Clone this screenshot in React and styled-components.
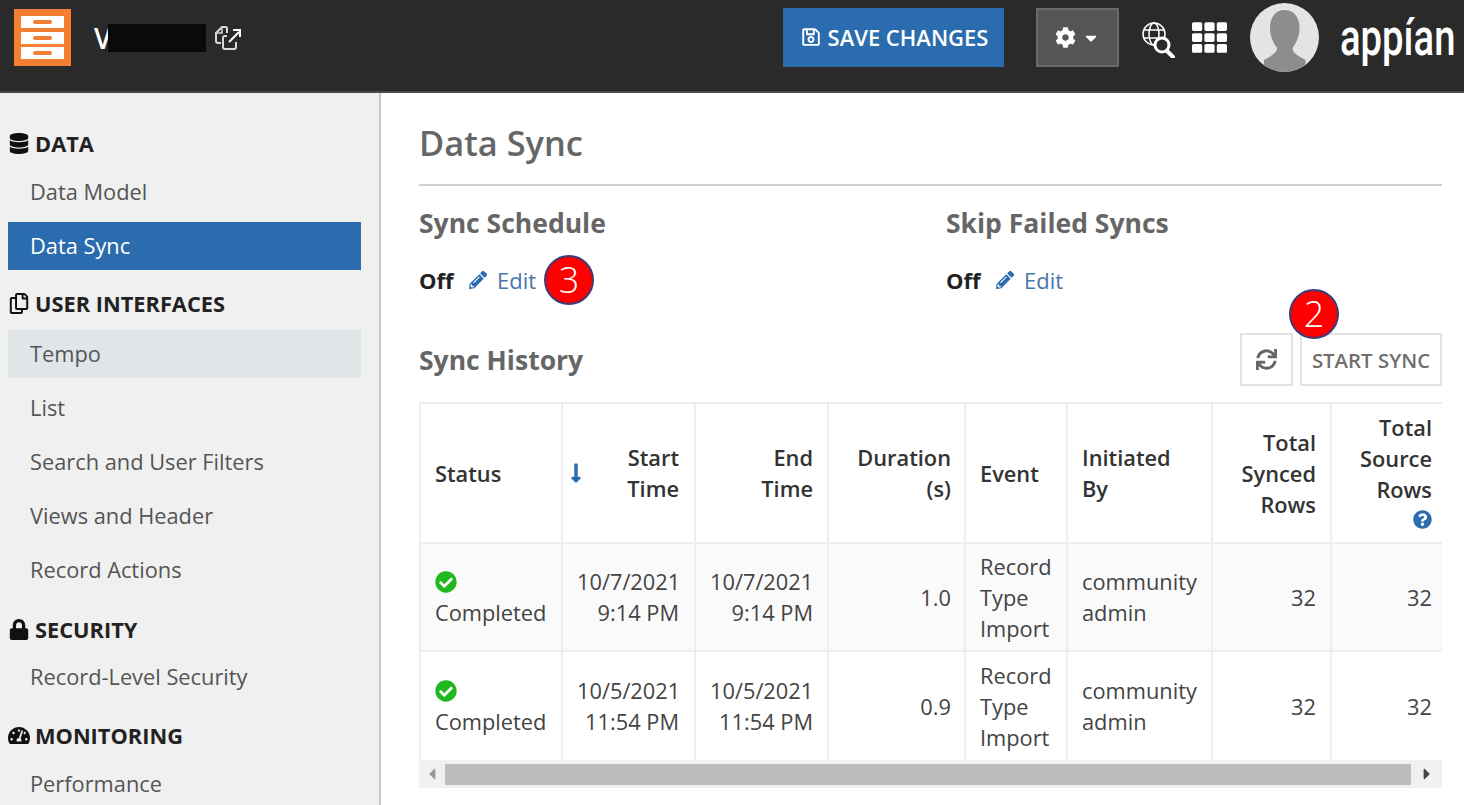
import React from "react";
import styled, { createGlobalStyle } from "styled-components";
import {
  FaCaretDown,
  FaCaretLeft,
  FaCaretRight,
  FaCheckCircle,
  FaCog,
  FaDatabase,
  FaLock,
  FaLongArrowAltDown,
  FaPencilAlt,
  FaQuestionCircle,
  FaRegCopy,
  FaRegSave,
  FaSync,
  FaTachometerAlt,
  FaTh,
} from "react-icons/fa";

const GlobalStyle = createGlobalStyle`
  html, body {
    margin: 0;
    padding: 0;
    height: 805px;
    overflow: hidden;
    background: #fff;
    font-family: "Open Sans", sans-serif;
  }
  * { box-sizing: border-box; }
`;

const Page = styled.div`
  width: 1464px;
  height: 805px;
  display: flex;
  flex-direction: column;
  overflow: hidden;
`;

const Header = styled.header`
  height: 93px;
  flex: none;
  display: flex;
  align-items: center;
  padding: 0 9px 16px 14px;
  background: #2a2a2a;
  border-bottom: 2px solid #4a4a4a;
`;

const AppTitle = styled.div`
  display: flex;
  align-items: center;
  margin-left: 23px;
  color: #fff;
  font-size: 28px;
  font-weight: 600;
`;

const Redacted = styled.span`
  width: 98px;
  height: 28px;
  margin: 1px 0 0 -3px;
  background: #0a0a0a;
`;

const HeaderTools = styled.div`
  margin-left: auto;
  display: flex;
  align-items: center;
`;

const SaveButton = styled.button`
  width: 221px;
  height: 59px;
  display: flex;
  align-items: center;
  justify-content: center;
  gap: 7px;
  padding: 0 0 2px 2px;
  border: 0;
  background: #2a6cad;
  color: #fff;
  font: 600 22px "Open Sans", sans-serif;
`;

const GearButton = styled.button`
  width: 83px;
  height: 59px;
  margin-left: 32px;
  display: flex;
  align-items: center;
  justify-content: center;
  gap: 6px;
  border: 2px solid #6b6b6b;
  background: #555;
  color: #fff;
`;

const GlobeWrap = styled.div`
  margin-left: 23px;
  width: 34px;
  height: 36px;
  margin-top: 4px;
`;

const GridIcon = styled(FaTh)`
  margin-left: 16px;
  color: #fff;
  font-size: 35px;
`;

const Avatar = styled.div`
  margin-left: 23px;
  width: 69px;
  height: 69px;
  border-radius: 50%;
  overflow: hidden;
`;

const AppianLogo = styled.span`
  width: 115px;
  margin-left: 21px;
  color: #fff;
  font: 500 52px/1 "Roboto", sans-serif;
  transform: scaleX(0.735);
  transform-origin: left center;
  white-space: nowrap;
`;

const Body = styled.div`
  flex: 1;
  display: flex;
  min-height: 0;
`;

const Sidebar = styled.nav`
  width: 381px;
  flex: none;
  padding: 33px 18px 0 8px;
  background: #f0f0f0;
  border-right: 2px solid #c8c8c8;
`;

const NavSection = styled.section`
  margin-bottom: ${({ $after }) => $after}px;
`;

const NavHeading = styled.h3`
  height: 36px;
  margin: 0 0 ${({ $below }) => $below}px;
  padding-bottom: 2px;
  display: flex;
  align-items: center;
  gap: 5px;
  color: #222;
  font-size: 21.8px;
  font-weight: 700;
  text-transform: uppercase;

  svg {
    width: 22px;
    height: 21px;
    color: #111;
  }
`;

const NavItem = styled.a`
  height: 48px;
  margin-bottom: 6px;
  padding: 0 0 2px 22px;
  display: flex;
  align-items: center;
  font-size: 21.8px;
  color: ${({ $active }) => ($active ? "#fff" : "#555")};
  background: ${({ $active, $hover }) =>
    $active ? "#2a6cad" : $hover ? "#e0e6e8" : "transparent"};

  &:last-child {
    margin-bottom: 0;
  }
`;

const Main = styled.main`
  flex: 1;
  min-width: 0;
  padding: 27px 22px 0 38px;
`;

const Title = styled.h1`
  height: 46px;
  margin: 0;
  color: #666;
  font-size: 34.4px;
  line-height: 46px;
  font-weight: 600;
`;

const Rule = styled.hr`
  height: 2px;
  margin: 18px 0 20px;
  border: 0;
  background: #d0d0d0;
`;

const Columns = styled.div`
  display: grid;
  grid-template-columns: 527px 1fr;
`;

const SubHeading = styled.h2`
  margin: 0;
  color: #666;
  font-size: 26.5px;
  line-height: 34px;
  font-weight: 700;
`;

const StatusRow = styled.div`
  height: 50px;
  margin-top: 15px;
  display: flex;
  align-items: center;
`;

const StatusValue = styled.span`
  width: 50px;
  color: #222;
  font-size: 22px;
  font-weight: 700;
`;

const EditLink = styled.a`
  display: flex;
  align-items: center;
  gap: 10px;
  color: #4a76a8;
  font-size: 22px;

  svg {
    width: 18px;
    height: 18px;
    color: #2a6cad;
  }
`;

const Badge = styled.span`
  width: 50px;
  height: 50px;
  display: flex;
  align-items: center;
  justify-content: center;
  flex: none;
  border-radius: 50%;
  background: #f00;
  border: 2px solid #3c3c78;
  color: #fff;
  font: 300 36px/1 "Open Sans", sans-serif;
`;

const InlineBadge = styled(Badge)`
  margin-left: 8px;
`;

const FloatingBadge = styled(Badge)`
  position: absolute;
  left: 49px;
  top: -44px;
`;

const HistoryBar = styled.div`
  margin-top: 28px;
  display: flex;
  align-items: center;
  justify-content: space-between;
`;

const HistoryActions = styled.div`
  position: relative;
  display: flex;
  gap: 7px;
`;

const IconButton = styled.button`
  width: 53px;
  height: 53px;
  display: flex;
  align-items: center;
  justify-content: center;
  background: #fff;
  border: 2px solid #e2e2e2;
  color: #666;

  svg {
    width: 21px;
    height: 21px;
  }
`;

const StartButton = styled.button`
  width: 142px;
  height: 53px;
  padding: 0;
  background: #fff;
  border: 2px solid #e2e2e2;
  color: #6f6f6f;
  font: 600 20.4px "Open Sans", sans-serif;
`;

const TableWrap = styled.div`
  margin-top: 16px;
  overflow: hidden;
`;

const Table = styled.table`
  width: 1028px;
  table-layout: fixed;
  border-collapse: separate;
  border-spacing: 0;
  font-size: 21.8px;
  line-height: 31px;
  color: #444;
  border-top: 2px solid #eee;
`;

const Th = styled.th`
  height: 140px;
  padding: 0 ${({ $pr }) => $pr || 15}px 0 14px;
  text-align: ${({ $right }) => ($right ? "right" : "left")};
  font-weight: 600;
  color: #333;
  border-left: 2px solid #eee;
  border-bottom: 2px solid #eee;
`;

const Td = styled.td`
  height: ${({ $h }) => $h}px;
  padding: 0 ${({ $pr }) => $pr || 15}px 0 14px;
  text-align: ${({ $right }) => ($right ? "right" : "left")};
  border-left: 2px solid #eee;
  border-bottom: ${({ $end }) => ($end ? "0" : "2px solid #eee")};
  background: ${({ $shade }) => ($shade ? "#fafafa" : "#fff")};
`;

const SortHead = styled.div`
  display: flex;
  align-items: center;
  justify-content: space-between;
  margin-left: -8px;

  svg {
    color: #2a6cad;
    width: 14px;
    height: 22px;
    flex: none;
  }
`;

const HelpIcon = styled(FaQuestionCircle)`
  display: block;
  margin: 5px 0 6px auto;
  width: 19px;
  height: 19px;
  color: #2a6cad;
`;

const StatusIcon = styled(FaCheckCircle)`
  display: block;
  width: 22px;
  height: 22px;
  margin: 5px 0 4px;
  color: #1fb81f;
`;

const Scrollbar = styled.div`
  height: 28px;
  display: flex;
  align-items: center;
  background: #f1f1f1;
`;

const ScrollArrow = styled.span`
  width: ${({ $w }) => $w}px;
  flex: none;
  display: flex;
  justify-content: center;
  color: ${({ $dark }) => ($dark ? "#444" : "#999")};
  font-size: 18px;
`;

const ScrollThumb = styled.div`
  flex: 1;
  height: 21px;
  background: #bdbdbd;
`;

const CabinetLogo = () => (
  <svg width="57" height="57" viewBox="0 0 57 57">
    <rect width="57" height="57" fill="#f47e32" />
    {[7, 23, 38].map((y) => (
      <g key={y}>
        <rect x="7" y={y} width="43" height="12" fill="#fff" />
        <rect x="19" y={y + 4} width="19" height="4" rx="2" fill="#f47e32" />
      </g>
    ))}
  </svg>
);

const LinkedFilesIcon = () => (
  <svg
    width="28"
    height="26"
    viewBox="0 0 28 26"
    fill="none"
    stroke="#d8d8d8"
    strokeWidth="2"
    style={{ marginLeft: 8 }}
  >
    <path d="M13 8V3.500Q13 2 11.500 2H8L2 8v8q0 2 2 2h3" />
    <path d="M8 2v6H2" strokeWidth="1.500" />
    <path d="M13 11h-2q-2 0-2 2v9q0 2 2 2h9q2 0 2-2v-5" />
    <path d="M15 17 25 7M19 5h7v7" stroke="#fff" />
  </svg>
);

const GlobeSearchIcon = () => (
  <svg width="34" height="36" viewBox="0 0 34 36" fill="none" stroke="#fff">
    <circle cx="12" cy="12" r="11" strokeWidth="1.500" />
    <ellipse cx="12" cy="12" rx="5" ry="11" strokeWidth="1.500" />
    <path d="M2 8h20M2 16h20" strokeWidth="1.500" />
    <circle cx="20" cy="23" r="7" fill="#2a2a2a" strokeWidth="3" />
    <path d="m25 29 6 6" strokeWidth="4" strokeLinecap="round" />
  </svg>
);

const AvatarImage = () => (
  <svg width="69" height="69" viewBox="0 0 69 69">
    <rect width="69" height="69" fill="#e4e4e4" />
    <path
      d="M34.500 7c10 0 15 8 15 18 0 9-4 16-7 20 0 5 6 8 13 12v12H14V57c7-4 13-7 13-12-3-4-7-11-7-20 0-10 5-18 14.500-18Z"
      fill="#8d8d8d"
    />
  </svg>
);

const rows = [
  { start: ["10/7/2021", "9:14 PM"], duration: "1.0", shade: true, h: 108 },
  { start: ["10/5/2021", "11:54 PM"], duration: "0.9", shade: false, h: 108 },
];

const App = () => (
  <Page>
    <GlobalStyle />
    <Header>
      <CabinetLogo />
      <AppTitle>
        V<Redacted />
        <LinkedFilesIcon />
      </AppTitle>
      <HeaderTools>
        <SaveButton>
          <FaRegSave size={20} />
          SAVE CHANGES
        </SaveButton>
        <GearButton>
          <FaCog size={21} />
          <FaCaretDown size={18} />
        </GearButton>
        <GlobeWrap>
          <GlobeSearchIcon />
        </GlobeWrap>
        <GridIcon />
        <Avatar>
          <AvatarImage />
        </Avatar>
        <AppianLogo>appían</AppianLogo>
      </HeaderTools>
    </Header>
    <Body>
      <Sidebar>
        <NavSection $after={16}>
          <NavHeading $below={6}>
            <FaDatabase />
            Data
          </NavHeading>
          <NavItem>Data Model</NavItem>
          <NavItem $active>Data Sync</NavItem>
        </NavSection>
        <NavSection $after={18}>
          <NavHeading $below={8}>
            <FaRegCopy />
            User Interfaces
          </NavHeading>
          <NavItem $hover>Tempo</NavItem>
          <NavItem>List</NavItem>
          <NavItem>Search and User Filters</NavItem>
          <NavItem>Views and Header</NavItem>
          <NavItem>Record Actions</NavItem>
        </NavSection>
        <NavSection $after={17}>
          <NavHeading $below={5}>
            <FaLock />
            Security
          </NavHeading>
          <NavItem>Record-Level Security</NavItem>
        </NavSection>
        <NavSection $after={0}>
          <NavHeading $below={6}>
            <FaTachometerAlt />
            Monitoring
          </NavHeading>
          <NavItem>Performance</NavItem>
        </NavSection>
      </Sidebar>
      <Main>
        <Title>Data Sync</Title>
        <Rule />
        <Columns>
          <div>
            <SubHeading>Sync Schedule</SubHeading>
            <StatusRow>
              <StatusValue>Off</StatusValue>
              <EditLink>
                <FaPencilAlt />
                Edit
              </EditLink>
              <InlineBadge>3</InlineBadge>
            </StatusRow>
          </div>
          <div>
            <SubHeading>Skip Failed Syncs</SubHeading>
            <StatusRow>
              <StatusValue>Off</StatusValue>
              <EditLink>
                <FaPencilAlt />
                Edit
              </EditLink>
            </StatusRow>
          </div>
        </Columns>
        <HistoryBar>
          <SubHeading>Sync History</SubHeading>
          <HistoryActions>
            <IconButton>
              <FaSync />
            </IconButton>
            <StartButton>START SYNC</StartButton>
            <FloatingBadge>2</FloatingBadge>
          </HistoryActions>
        </HistoryBar>
        <TableWrap>
          <Table>
            <colgroup>
              <col style={{ width: 142 }} />
              <col style={{ width: 133 }} />
              <col style={{ width: 133 }} />
              <col style={{ width: 137 }} />
              <col style={{ width: 102 }} />
              <col style={{ width: 145 }} />
              <col style={{ width: 119 }} />
              <col style={{ width: 117 }} />
            </colgroup>
            <thead>
              <tr>
                <Th>Status</Th>
                <Th $right>
                  <SortHead>
                    <FaLongArrowAltDown />
                    <span>
                      Start
                      <br />
                      Time
                    </span>
                  </SortHead>
                </Th>
                <Th $right $pr={14}>
                  End
                  <br />
                  Time
                </Th>
                <Th $right $pr={13}>
                  Duration
                  <br />
                  (s)
                </Th>
                <Th>Event</Th>
                <Th>
                  Initiated
                  <br />
                  By
                </Th>
                <Th $right $pr={14}>
                  Total
                  <br />
                  Synced
                  <br />
                  Rows
                </Th>
                <Th $right>
                  Total
                  <br />
                  Source
                  <br />
                  Rows
                  <HelpIcon />
                </Th>
              </tr>
            </thead>
            <tbody>
              {rows.map((row, key) => {
                const cell = { $h: row.h, $shade: row.shade, $end: key === 1 };
                return (
                  <tr key={key}>
                    <Td {...cell}>
                      <StatusIcon />
                      Completed
                    </Td>
                    <Td {...cell} $right>
                      {row.start[0]}
                      <br />
                      {row.start[1]}
                    </Td>
                    <Td {...cell} $right $pr={14}>
                      {row.start[0]}
                      <br />
                      {row.start[1]}
                    </Td>
                    <Td {...cell} $right $pr={13}>
                      {row.duration}
                    </Td>
                    <Td {...cell}>
                      Record
                      <br />
                      Type
                      <br />
                      Import
                    </Td>
                    <Td {...cell}>
                      community
                      <br />
                      admin
                    </Td>
                    <Td {...cell} $right $pr={14}>
                      32
                    </Td>
                    <Td {...cell} $right>
                      32
                    </Td>
                  </tr>
                );
              })}
            </tbody>
          </Table>
        </TableWrap>
        <Scrollbar>
          <ScrollArrow $w={26}>
            <FaCaretLeft />
          </ScrollArrow>
          <ScrollThumb />
          <ScrollArrow $w={31} $dark>
            <FaCaretRight />
          </ScrollArrow>
        </Scrollbar>
      </Main>
    </Body>
  </Page>
);

export default App;
